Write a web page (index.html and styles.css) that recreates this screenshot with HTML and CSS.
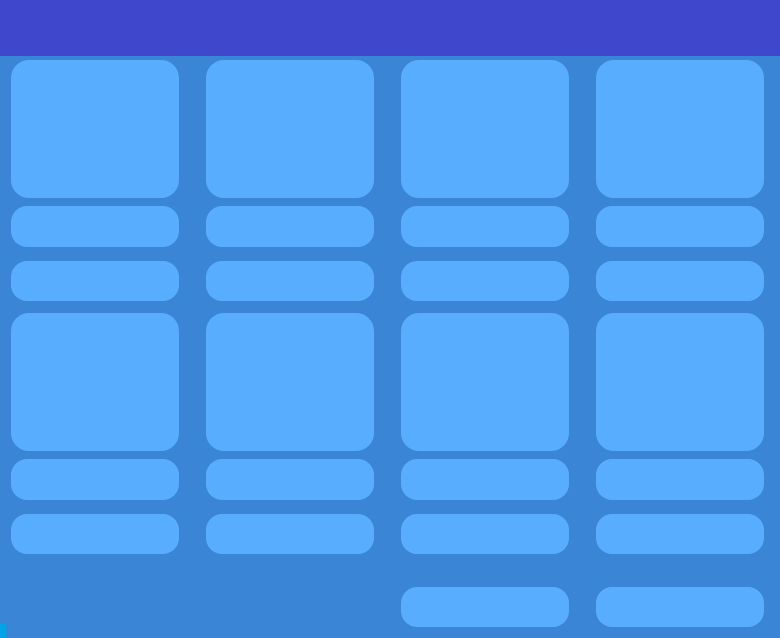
FILE: index.html
```html
<!DOCTYPE html>
<html lang="en">
<head>
    <meta charset="UTF-8">
    <meta name="viewport" content="width=device-width, initial-scale=1.0">
    <title>Loading</title>
    <link rel="stylesheet" href="styles.css">
</head>
<body>

    <header class="topbar"></header>

    <main class="grid">
        <div class="column">
            <div class="box"></div>
            <div class="pill first"></div>
            <div class="pill second"></div>
            <div class="box next"></div>
            <div class="pill first"></div>
            <div class="pill second"></div>
        </div>
        <div class="column">
            <div class="box"></div>
            <div class="pill first"></div>
            <div class="pill second"></div>
            <div class="box next"></div>
            <div class="pill first"></div>
            <div class="pill second"></div>
        </div>
        <div class="column">
            <div class="box"></div>
            <div class="pill first"></div>
            <div class="pill second"></div>
            <div class="box next"></div>
            <div class="pill first"></div>
            <div class="pill second"></div>
            <div class="pill extra"></div>
        </div>
        <div class="column">
            <div class="box"></div>
            <div class="pill first"></div>
            <div class="pill second"></div>
            <div class="box next"></div>
            <div class="pill first"></div>
            <div class="pill second"></div>
            <div class="pill extra"></div>
        </div>
    </main>

    <div class="corner-mark"></div>

</body>
</html>
```

FILE: styles.css
```css
html, body {
    margin: 0;
    height: 100%;
    overflow: hidden;
}
body {
    background-color: #3a85d5;
    font-family: "Liberation Sans", Arial, sans-serif;
}
.topbar {
    height: 56px;
    background-color: #3f48cc;
}
.grid {
    display: grid;
    grid-template-columns: repeat(4, 168px);
    column-gap: 27px;
    padding: 4px 11px 0;
}
.column {
    display: flex;
    flex-direction: column;
}
.box {
    height: 138px;
    background-color: #59adff;
    border-radius: 18px;
}
.box.next {
    margin-top: 12px;
}
.pill {
    background-color: #59adff;
    border-radius: 16px;
}
.pill.first {
    height: 41px;
    margin-top: 8px;
}
.pill.second {
    height: 40px;
    margin-top: 14px;
}
.pill.extra {
    height: 40px;
    margin-top: 33px;
}
.corner-mark {
    position: fixed;
    left: 0;
    bottom: 0;
    width: 5px;
    height: 14px;
    background-color: #00a2e8;
}
```
